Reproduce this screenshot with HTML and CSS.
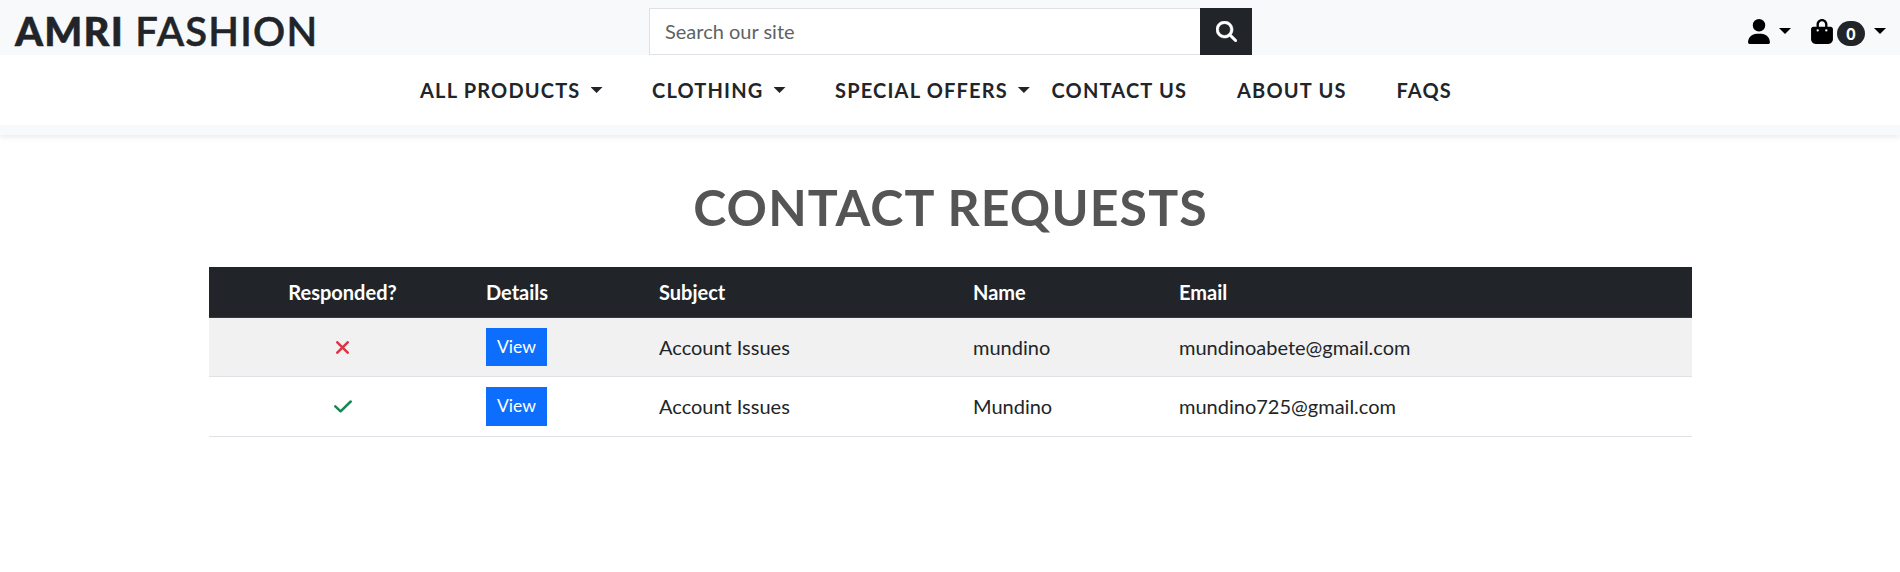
FILE: index.html
```html
<!DOCTYPE html>
<html lang="en">
<head>
<meta charset="utf-8">
<title>Amri Fashion</title>
<link rel="stylesheet" href="styles.css">
</head>
<body>
<header class="site-header">
  <div class="topbar">
    <a class="brand"><strong>AMRI</strong> FASHION</a>
    <form class="search">
      <input class="search-input" type="text" placeholder="Search our site">
      <button class="search-button" type="button" aria-label="Search"><svg viewBox="0 0 512 512"><path d="M416 208c0 45.900-14.900 88.300-40 122.700L502.600 457.400c12.500 12.500 12.500 32.800 0 45.300s-32.800 12.500-45.300 0L330.700 376c-34.400 25.200-76.800 40-122.700 40C93.100 416 0 322.900 0 208S93.100 0 208 0S416 93.100 416 208zM208 352a144 144 0 1 0 0-288 144 144 0 1 0 0 288z"/></svg></button>
    </form>
    <div class="account">
      <a class="account-link"><svg viewBox="0 0 448 512"><path d="M224 256A128 128 0 1 0 224 0a128 128 0 1 0 0 256zm-45.700 48C79.800 304 0 383.800 0 482.300C0 498.700 13.300 512 29.700 512H418.300c16.400 0 29.700-13.300 29.700-29.700C448 383.800 368.200 304 269.700 304H178.300z"/></svg><span class="caret"></span></a>
      <a class="account-link bag"><svg viewBox="0 0 448 512"><path d="M160 112c0-35.300 28.700-64 64-64s64 28.700 64 64v48H160V112zm-48 48H48c-26.500 0-48 21.500-48 48V416c0 53 43 96 96 96H352c53 0 96-43 96-96V208c0-26.500-21.500-48-48-48H336V112C336 50.100 285.900 0 224 0S112 50.100 112 112v48zm24 48a24 24 0 1 1 0 48 24 24 0 1 1 0-48zm152 24a24 24 0 1 1 48 0 24 24 0 1 1 -48 0z"/></svg><span class="badge">0</span><span class="caret"></span></a>
    </div>
  </div>
  <nav class="main-nav">
    <a class="nav-link">ALL PRODUCTS<span class="caret"></span></a>
    <a class="nav-link">CLOTHING<span class="caret"></span></a>
    <a class="nav-link">SPECIAL OFFERS<span class="caret"></span></a>
    <a class="nav-link">CONTACT US</a>
    <a class="nav-link">ABOUT US</a>
    <a class="nav-link">FAQS</a>
  </nav>
</header>
<main class="content">
  <h1 class="title">CONTACT REQUESTS</h1>
  <table class="requests">
    <colgroup><col class="col-responded"><col class="col-details"><col class="col-subject"><col class="col-name"><col></colgroup>
    <thead>
      <tr><th class="centered">Responded?</th><th>Details</th><th>Subject</th><th>Name</th><th>Email</th></tr>
    </thead>
    <tbody>
      <tr class="striped"><td class="centered"><svg class="status cross" viewBox="0 0 13 13"><path d="M1.300 1.300 11.700 11.700M11.700 1.300 1.300 11.700"/></svg></td><td><a class="view">View</a></td><td>Account Issues</td><td>mundino</td><td>mundinoabete@gmail.com</td></tr>
      <tr class="tall"><td class="centered"><svg class="status check" viewBox="0 0 18 13"><path d="M1.300 6.300 6.600 11.300 16.700 1.500"/></svg></td><td><a class="view">View</a></td><td>Account Issues</td><td>Mundino</td><td>mundino725@gmail.com</td></tr>
    </tbody>
  </table>
</main>
</body>
</html>
```
FILE: styles.css
```css
* { box-sizing: border-box; }
body { margin: 0; background: #fff; color: #212529; font: 400 20px/30px Lato, sans-serif; }
.site-header { height: 135px; background: #f8f9fa; box-shadow: 0 2.5px 5px rgba(0, 0, 0, .075); }
.topbar { display: grid; grid-template-columns: 649px 603px 1fr; height: 55px; background: #f8f9fb; }
.brand { padding: 7px 0 0 15px; font-size: 40px; line-height: 48px; font-weight: 600; letter-spacing: 1.200px; -webkit-text-stroke: .5px #212529; }
.brand strong { font-weight: 900; }
.search { display: flex; height: 47px; margin-top: 8px; }
.search-input { width: 551px; padding: 0 15px 2px; border: 1px solid #dee2e6; border-right: 0; background: #fff; font: 400 20px/30px Lato, sans-serif; }
.search-input::placeholder { color: #5f6265; opacity: 1; }
.search-button { display: flex; align-items: center; justify-content: center; width: 52px; padding: 0 0 1px; border: 0; background: #212529; }
.search-button svg { width: 21px; height: 21px; fill: #fff; stroke: #fff; stroke-width: 12; }
.account { display: flex; justify-content: flex-end; gap: 20px; padding: 19px 14px 0 0; }
.account-link { display: flex; color: #000; }
.account-link svg { width: 22px; height: 25px; }
.caret { width: 12px; height: 6px; background: currentColor; clip-path: polygon(0 0, 100% 0, 50% 100%); }
.account .caret { margin: 9px 0 0 9px; }
.badge { width: 28px; height: 25px; margin: 2px 0 0 4px; border-radius: 13px; background: #212529; color: #fff; font-size: 16px; line-height: 25px; font-weight: 900; text-align: center; }
.main-nav { display: grid; grid-template-columns: 232px 183px 216.500px 185.500px 159.500px 1fr; height: 70px; padding: 20px 0 0 420px; background: #fff; }
.nav-link { display: flex; font-weight: 700; letter-spacing: 1.180px; white-space: nowrap; }
.nav-link .caret { margin: 12px 0 0 10px; }
.content { width: 1483px; margin: 0 0 0 209px; }
.title { margin: 0; padding: 42px 0 30px; color: #555; font-size: 50px; line-height: 60px; font-weight: 700; letter-spacing: 1.150px; text-align: center; }
.requests { width: 100%; table-layout: fixed; border-collapse: separate; border-spacing: 0; }
.col-responded { width: 267px; }
.col-details { width: 173px; }
.col-subject { width: 314px; }
.col-name { width: 206px; }
.requests th { height: 51px; padding: 0 10px; border-bottom: 1px solid #373b3e; background: #212529; color: #fff; font-weight: 700; text-align: left; }
.requests td { height: 59px; padding: 0 10px; border-bottom: 1px solid #dee2e6; }
.requests .tall td { height: 60px; padding-bottom: 1px; }
.requests .centered { text-align: center; }
.striped { background: #f1f1f1; }
.view { display: flex; width: 61px; height: 38px; align-items: center; justify-content: center; padding-bottom: 1px; background: #0d6efd; color: #fff; font-size: 17.500px; }
.tall .view { height: 39px; margin-bottom: -1px; }
.status { display: block; height: 13px; margin: 0 auto; fill: none; stroke-width: 2.500; stroke-linecap: round; stroke-linejoin: round; }
.cross { width: 13px; stroke: #dc3545; }
.check { width: 18px; stroke: #198754; }
```
